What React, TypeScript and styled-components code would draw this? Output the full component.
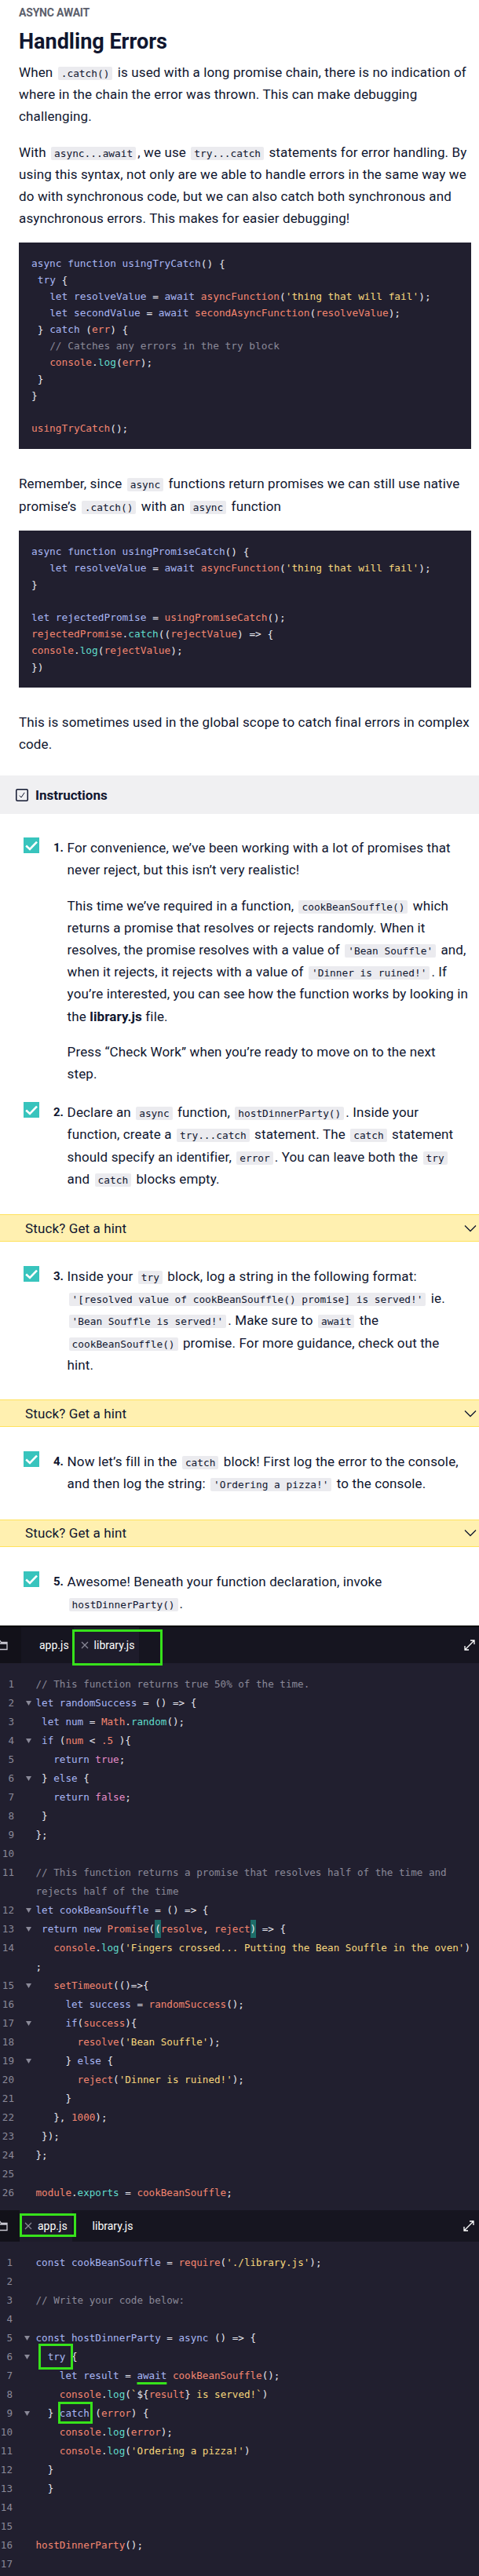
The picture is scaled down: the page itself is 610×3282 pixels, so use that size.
import React from 'react'
import styled, { createGlobalStyle } from 'styled-components'

const GlobalStyle = createGlobalStyle`
  * { box-sizing: border-box; }
  body { margin: 0; background: #fff; }
`

const mono = `'DejaVu Sans Mono', 'Liberation Mono', monospace`
const sans = `Roboto, 'Liberation Sans', sans-serif`
const green = '#37e21b'

const colors: Record<string, string> = {
  t: '#e6e6ee', // plain text and punctuation
  k: '#a8b6f4', // keywords and declared names
  f: '#f4866f', // identifiers and calls
  s: '#f7d77c', // strings
  m: '#60dccb', // methods / properties
  c: '#8a8998', // comments
  n: '#f4866f', // numbers
  b: '#e58bc7', // booleans
}

type Tok = [string, string]

// "[[k|let]] x" -> [['k','let'], ['t',' x']]
function parse(src: string): Tok[] {
  const out: Tok[] = []
  const re = /\[\[(\w)\|(.*?)\]\]/g
  let last = 0
  let m: RegExpExecArray | null
  while ((m = re.exec(src))) {
    if (m.index > last) out.push(['t', src.slice(last, m.index)])
    out.push([m[1], m[2]])
    last = re.lastIndex
  }
  if (last < src.length) out.push(['t', src.slice(last)])
  return out
}

/* ---------- article ---------- */

const Page = styled.div`
  width: 610px;
  font-family: ${sans};
  color: #10162f;
`

const Article = styled.article`
  padding: 6px 10px 9px 24px;
`

const Eyebrow = styled.div`
  font-size: 14px;
  font-weight: 700;
  line-height: 20px;
  color: #5c5f6c;
  letter-spacing: -0.2px;
`

const Title = styled.h1`
  margin: 9px 0 7px;
  font-size: 27px;
  line-height: 36px;
  font-weight: 700;
`

const Para = styled.p`
  margin: 0 0 17px;
  font-size: 17px;
  line-height: 28.2px;
  letter-spacing: 0.13px;
`

const Code = styled.code`
  font-family: ${mono};
  font-size: 12.8px;
  line-height: 1;
  letter-spacing: 0;
  background: #ebebef;
  padding: 1px 4px;
  margin: 0 2px;
  border-radius: 2px;
`

const CodeBlock = styled.pre`
  margin: 0 0 30px;
  padding: 16px;
  background: #211f2f;
  font-family: ${mono};
  font-size: 12.8px;
  line-height: 21px;
  white-space: pre;
`

const CodeLine = styled.div`
  min-height: 21px;
`

const Tk = styled.span<{ $c: string }>`
  color: ${p => p.$c};
`

const Bracket = styled.span`
  color: ${colors.t};
  background: #1d6d69;
  padding: 4px 0;
`

const Marked = styled.span<{ $inset: string }>`
  position: relative;
  color: ${colors.k};

  &::after {
    content: '';
    position: absolute;
    inset: ${p => p.$inset};
    border: 3px solid ${green};
    pointer-events: none;
  }
`

const Underlined = styled.span`
  color: ${colors.k};
  text-decoration-line: underline;
  text-decoration-color: ${green};
  text-decoration-thickness: 3px;
  text-underline-offset: 4px;
`

function Tokens({ src }: { src: string }) {
  return (
    <>
      {parse(src).map(([type, text], i) => {
        if (type === 'h') return <Bracket key={i}>{text}</Bracket>
        if (type === 'T') return <Marked key={i} $inset="-9px -10px -9px -12px">{text}</Marked>
        if (type === 'C') return <Marked key={i} $inset="-7px -4px -6px -2px">{text}</Marked>
        if (type === 'A') return <Underlined key={i}>{text}</Underlined>
        return <Tk key={i} $c={colors[type]}>{text}</Tk>
      })}
    </>
  )
}

const tryCatchCode = [
  "[[k|async]] [[k|function]] [[k|usingTryCatch]]() {",
  " [[k|try]] {",
  "   [[k|let]] [[k|resolveValue]] = [[k|await]] [[f|asyncFunction]]([[s|'thing that will fail']]);",
  "   [[k|let]] [[k|secondValue]] = [[k|await]] [[f|secondAsyncFunction]]([[f|resolveValue]]);",
  " } [[k|catch]] ([[f|err]]) {",
  "   [[c|// Catches any errors in the try block]]",
  "   [[f|console]].[[m|log]]([[f|err]]);",
  " }",
  "}",
  "",
  "[[f|usingTryCatch]]();",
]

const promiseCatchCode = [
  "[[k|async]] [[k|function]] [[k|usingPromiseCatch]]() {",
  "   [[k|let]] [[k|resolveValue]] = [[k|await]] [[f|asyncFunction]]([[s|'thing that will fail']]);",
  "}",
  "",
  "[[k|let]] [[k|rejectedPromise]] = [[f|usingPromiseCatch]]();",
  "[[f|rejectedPromise]].[[m|catch]](([[f|rejectValue]]) => {",
  "[[f|console]].[[m|log]]([[f|rejectValue]]);",
  "})",
]

function Snippet({ lines }: { lines: string[] }) {
  return (
    <CodeBlock>
      {lines.map((l, i) => (
        <CodeLine key={i}>
          <Tokens src={l} />
        </CodeLine>
      ))}
    </CodeBlock>
  )
}

/* ---------- instructions ---------- */

const InstructionsBar = styled.div`
  display: flex;
  align-items: center;
  gap: 9px;
  height: 49px;
  padding-left: 20px;
  background: #f0f0f2;
  font-size: 17px;
  font-weight: 700;
`

const Step = styled.div<{ $pt: number; $pb: number }>`
  display: grid;
  grid-template-columns: 38px 17.6px 1fr;
  align-items: start;
  padding: ${p => p.$pt}px 14px ${p => p.$pb}px 30px;
`

const CheckBox = styled.span`
  display: flex;
  width: 20px;
  height: 20px;
  margin-top: 1px;
  background: #38c4bd;
`

const StepNum = styled.span`
  font-size: 15px;
  font-weight: 700;
  line-height: 28.2px;
`

const StepBody = styled.div`
  font-size: 17px;
  line-height: 28.2px;
  letter-spacing: 0.13px;

  & > p {
    margin: 0 0 17px;
  }
  & > p:last-child {
    margin-bottom: 0;
  }
`

const Hint = styled.div`
  display: flex;
  align-items: center;
  justify-content: space-between;
  height: 35px;
  padding: 0 3px 0 32px;
  background: #fff0b0;
  border-top: 1px solid #ffe25c;
  border-bottom: 1px solid #ffe25c;
  font-size: 17px;
  letter-spacing: 0.13px;
`

function TealCheck() {
  return (
    <CheckBox>
      <svg width="20" height="20" viewBox="0 0 20 20">
        <polyline points="3.2,10.5 8,15 17,5.6" fill="none" stroke="#fff" strokeWidth="2.6" />
      </svg>
    </CheckBox>
  )
}

function OutlineCheck() {
  return (
    <svg width="16" height="16" viewBox="0 0 16 16">
      <rect x="0.75" y="0.75" width="14.5" height="14.5" rx="1.5" fill="none" stroke="#10162f" strokeWidth="1.5" />
      <polyline points="4.8,8.6 7,11 11.2,4.8" fill="none" stroke="#10162f" strokeWidth="1" />
    </svg>
  )
}

function Chevron() {
  return (
    <svg width="16" height="10" viewBox="0 0 16 10">
      <polyline points="1,1.5 8,8.5 15,1.5" fill="none" stroke="#10162f" strokeWidth="1.3" />
    </svg>
  )
}

/* ---------- editors ---------- */

const Editor = styled.section<{ $top?: boolean }>`
  background: #211f2f;
  border-top: ${p => (p.$top ? '2px solid #000' : 'none')};
`

const TabBar = styled.div<{ $h: number }>`
  display: flex;
  align-items: stretch;
  height: ${p => p.$h}px;
  background: #161520;
`

const SideStrip = styled.div<{ $w: number }>`
  display: flex;
  align-items: center;
  width: ${p => p.$w}px;
  overflow: hidden;
  background: #121119;
`

const Tab = styled.div<{ $active?: boolean; $pl: number }>`
  position: relative;
  display: flex;
  align-items: center;
  gap: 7px;
  padding: 0 6px 0 ${p => p.$pl}px;
  background: ${p => (p.$active ? '#1e1c2b' : 'transparent')};
  font-size: 14px;
  color: #fff;
`

const TabMark = styled.span<{ $inset: string }>`
  position: absolute;
  inset: ${p => p.$inset};
  border: 3px solid ${green};
  pointer-events: none;
`

const CloseIcon = styled.svg<{ $hidden?: boolean }>`
  visibility: ${p => (p.$hidden ? 'hidden' : 'visible')};
`

const Expand = styled.div<{ $mr: number }>`
  display: flex;
  align-items: center;
  margin-left: auto;
  margin-right: ${p => p.$mr}px;
`

const EditorBody = styled.div<{ $pb: number }>`
  padding: 15px 0 ${p => p.$pb}px;
  font-family: ${mono};
  font-size: 12.6px;
`

const Row = styled.div<{ $g: number }>`
  display: grid;
  grid-template-columns: ${p => p.$g}px ${p => 45.5 - p.$g}px 1fr;
  align-items: center;
  height: 24px;
  line-height: 24px;
`

const LineNo = styled.span`
  text-align: right;
  color: #8a8998;
`

const FoldCell = styled.span`
  display: flex;
  align-items: center;
  padding-left: 15px;
`

const CodeText = styled.span`
  white-space: pre;
  color: ${colors.t};
`

function Close({ hidden }: { hidden?: boolean }) {
  return (
    <CloseIcon $hidden={hidden} width="10" height="10" viewBox="0 0 10 10">
      <path d="M1 1 L9 9 M9 1 L1 9" stroke="#8a8998" strokeWidth="1.2" />
    </CloseIcon>
  )
}

function Folder() {
  return (
    <svg width="16" height="14" viewBox="0 0 16 14" style={{ marginLeft: -6 }}>
      <path d="M1 1.5 H6 L7.5 3.5 H15 V12.5 H1 Z M1 5 H15" fill="none" stroke="#c9c8d2" strokeWidth="1.3" />
    </svg>
  )
}

function ExpandIcon() {
  return (
    <svg width="16" height="16" viewBox="0 0 16 16">
      <path d="M2 14 L14 2 M9 2 H14 V7 M2 9 V14 H7" fill="none" stroke="#fff" strokeWidth="1.3" />
    </svg>
  )
}

function FoldArrow() {
  return (
    <svg width="7" height="6" viewBox="0 0 7 6">
      <polygon points="0,0 7,0 3.5,6" fill="#8a8998" />
    </svg>
  )
}

type EditorRow = [number | null, boolean, string]

const libraryRows: EditorRow[] = [
  [1, false, '[[c|// This function returns true 50% of the time.]]'],
  [2, true, '[[k|let]] [[k|randomSuccess]] = () => {'],
  [3, false, ' [[k|let]] [[k|num]] = [[f|Math]].[[m|random]]();'],
  [4, true, ' [[k|if]] ([[f|num]] < [[n|.5]] ){'],
  [5, false, '   [[k|return]] [[b|true]];'],
  [6, true, ' } [[k|else]] {'],
  [7, false, '   [[k|return]] [[b|false]];'],
  [8, false, ' }'],
  [9, false, '};'],
  [10, false, ''],
  [11, false, '[[c|// This function returns a promise that resolves half of the time and]]'],
  [null, false, '[[c|rejects half of the time]]'],
  [12, true, '[[k|let]] [[k|cookBeanSouffle]] = () => {'],
  [13, true, ' [[k|return]] [[k|new]] [[f|Promise]]([[h|(]][[f|resolve]], [[f|reject]][[h|)]] => {'],
  [14, false, "   [[f|console]].[[m|log]]([[s|'Fingers crossed... Putting the Bean Souffle in the oven']])"],
  [null, false, ';'],
  [15, true, '   [[f|setTimeout]](()=>{'],
  [16, false, '     [[k|let]] [[k|success]] = [[f|randomSuccess]]();'],
  [17, true, '     [[k|if]]([[f|success]]){'],
  [18, false, "       [[f|resolve]]([[s|'Bean Souffle']]);"],
  [19, true, '     } [[k|else]] {'],
  [20, false, "       [[f|reject]]([[s|'Dinner is ruined!']]);"],
  [21, false, '     }'],
  [22, false, '   }, [[n|1000]]);'],
  [23, false, ' });'],
  [24, false, '};'],
  [25, false, ''],
  [26, false, '[[f|module]].[[m|exports]] = [[f|cookBeanSouffle]];'],
]

const appRows: EditorRow[] = [
  [1, false, "[[k|const]] [[k|cookBeanSouffle]] = [[f|require]]([[s|'./library.js']]);"],
  [2, false, ''],
  [3, false, '[[c|// Write your code below:]]'],
  [4, false, ''],
  [5, true, '[[k|const]] [[k|hostDinnerParty]] = [[k|async]] () => {'],
  [6, true, '  [[T|try]] {'],
  [7, false, '    [[k|let]] [[k|result]] = [[A|await]] [[f|cookBeanSouffle]]();'],
  [8, false, '    [[f|console]].[[m|log]]([[s|`]]${[[f|result]]}[[s| is served!`]])'],
  [9, true, '  } [[C|catch]] ([[f|error]]) {'],
  [10, false, '    [[f|console]].[[m|log]]([[f|error]]);'],
  [11, false, "    [[f|console]].[[m|log]]([[s|'Ordering a pizza!']])"],
  [12, false, '  }'],
  [13, false, '  }'],
  [14, false, ''],
  [15, false, ''],
  [16, false, '[[f|hostDinnerParty]]();'],
  [17, false, ''],
]

function Lines({ rows, gutter }: { rows: EditorRow[]; gutter: number }) {
  return (
    <>
      {rows.map(([n, fold, src], i) => (
        <Row key={i} $g={gutter}>
          <LineNo>{n ?? ''}</LineNo>
          <FoldCell>{fold && <FoldArrow />}</FoldCell>
          <CodeText>
            <Tokens src={src} />
          </CodeText>
        </Row>
      ))}
    </>
  )
}

export default function App() {
  return (
    <Page>
      <GlobalStyle />
      <Article>
        <Eyebrow>ASYNC AWAIT</Eyebrow>
        <Title>Handling Errors</Title>
        <Para>
          When <Code>.catch()</Code> is used with a long promise chain, there is no indication of where in the
          chain the error was thrown. This can make debugging challenging.
        </Para>
        <Para>
          With <Code>async...await</Code>, we use <Code>try...catch</Code> statements for error handling. By using
          this syntax, not only are we able to handle errors in the same way we do with synchronous code, but we can
          also catch both synchronous and asynchronous errors. This makes for easier debugging!
        </Para>
        <Snippet lines={tryCatchCode} />
        <Para>
          Remember, since <Code>async</Code> functions return promises we can still use native promise’s{' '}
          <Code>.catch()</Code> with an <Code>async</Code> function
        </Para>
        <Snippet lines={promiseCatchCode} />
        <Para>This is sometimes used in the global scope to catch final errors in complex code.</Para>
      </Article>

      <InstructionsBar>
        <OutlineCheck />
        Instructions
      </InstructionsBar>

      <Step $pt={29} $pb={21}>
        <TealCheck />
        <StepNum>1.</StepNum>
        <StepBody>
          <p>For convenience, we’ve been working with a lot of promises that never reject, but this isn’t very realistic!</p>
          <p>
            This time we’ve required in a function, <Code>cookBeanSouffle()</Code> which returns a promise that
            resolves or rejects randomly. When it resolves, the promise resolves with a value of{' '}
            <Code>'Bean Souffle'</Code> and, when it rejects, it rejects with a value of{' '}
            <Code>'Dinner is ruined!'</Code>. If you’re interested, you can see how the function works by looking in
            the <strong>library.js</strong> file.
          </p>
          <p>Press “Check Work” when you’re ready to move on to the next step.</p>
        </StepBody>
      </Step>

      <Step $pt={0} $pb={31}>
        <TealCheck />
        <StepNum>2.</StepNum>
        <StepBody>
          <p>
            Declare an <Code>async</Code> function, <Code>hostDinnerParty()</Code>. Inside your function, create a{' '}
            <Code>try...catch</Code> statement. The <Code>catch</Code> statement should specify an identifier,{' '}
            <Code>error</Code>. You can leave both the <Code>try</Code> and <Code>catch</Code> blocks empty.
          </p>
        </StepBody>
      </Step>
      <Hint>
        Stuck? Get a hint
        <Chevron />
      </Hint>

      <Step $pt={30} $pb={30}>
        <TealCheck />
        <StepNum>3.</StepNum>
        <StepBody>
          <p>
            Inside your <Code>try</Code> block, log a string in the following format:{' '}
            <Code>'[resolved value of cookBeanSouffle() promise] is served!'</Code> ie.{' '}
            <Code>'Bean Souffle is served!'</Code>. Make sure to <Code>await</Code> the{' '}
            <Code>cookBeanSouffle()</Code> promise. For more guidance, check out the hint.
          </p>
        </StepBody>
      </Step>
      <Hint>
        Stuck? Get a hint
        <Chevron />
      </Hint>

      <Step $pt={30} $pb={31}>
        <TealCheck />
        <StepNum>4.</StepNum>
        <StepBody>
          <p>
            Now let’s fill in the <Code>catch</Code> block! First log the error to the console, and then log the
            string: <Code>'Ordering a pizza!'</Code> to the console.
          </p>
        </StepBody>
      </Step>
      <Hint>
        Stuck? Get a hint
        <Chevron />
      </Hint>

      <Step $pt={30} $pb={14}>
        <TealCheck />
        <StepNum>5.</StepNum>
        <StepBody>
          <p>
            Awesome! Beneath your function declaration, invoke <Code>hostDinnerParty()</Code>.
          </p>
        </StepBody>
      </Step>

      <Editor $top>
        <TabBar $h={46}>
          <SideStrip $w={27}>
            <Folder />
          </SideStrip>
          <Tab $pl={6}>
            <Close hidden />
            app.js
          </Tab>
          <Tab $active $pl={9}>
            <Close />
            library.js
            <TabMark $inset="3px -30px -3px -2px" />
          </Tab>
          <Expand $mr={4}>
            <ExpandIcon />
          </Expand>
        </TabBar>
        <EditorBody $pb={10}>
          <Lines rows={libraryRows} gutter={18} />
        </EditorBody>
      </Editor>

      <Editor>
        <TabBar $h={40}>
          <SideStrip $w={25}>
            <Folder />
          </SideStrip>
          <Tab $active $pl={6}>
            <Close />
            app.js
            <TabMark $inset="4px -5px 6px 0" />
          </Tab>
          <Tab $pl={9}>
            <Close hidden />
            library.js
          </Tab>
          <Expand $mr={5}>
            <ExpandIcon />
          </Expand>
        </TabBar>
        <EditorBody $pb={3}>
          <Lines rows={appRows} gutter={16} />
        </EditorBody>
      </Editor>
    </Page>
  )
}
